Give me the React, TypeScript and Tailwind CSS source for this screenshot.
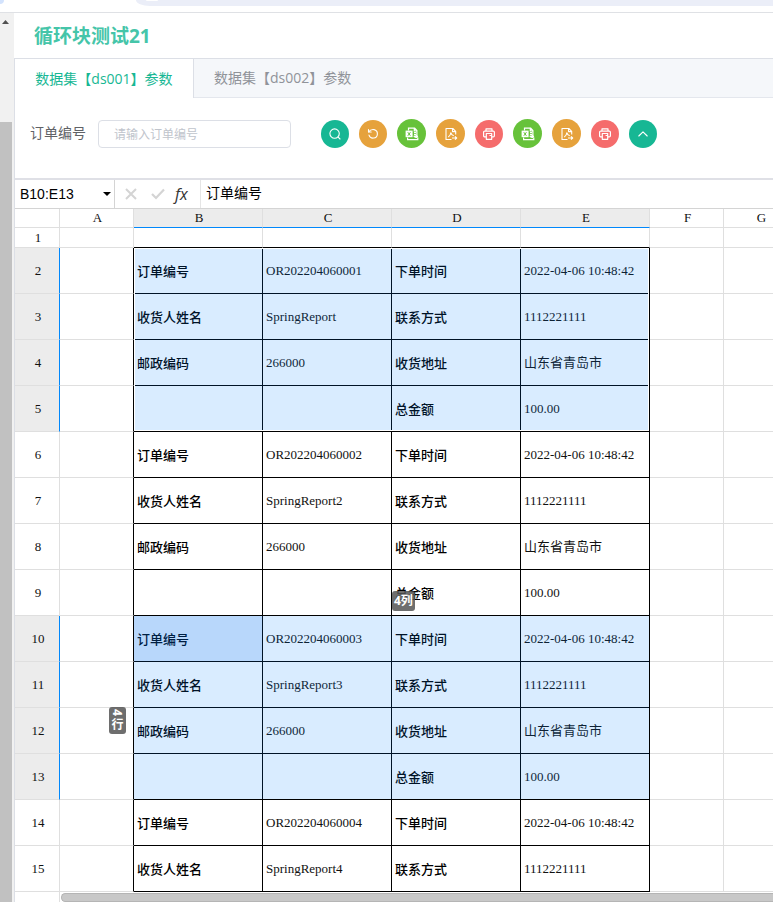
import type { ReactNode } from "react";

interface ActionButtonProps {
    label: string;
    className: string;
    children: ReactNode;
}

const rows = [
    ["订单编号", "OR202204060001", "下单时间", "2022-04-06 10:48:42"],
    ["收货人姓名", "SpringReport", "联系方式", "1112221111"],
    ["邮政编码", "266000", "收货地址", "山东省青岛市"],
    ["", "", "总金额", "100.00"],
    ["订单编号", "OR202204060002", "下单时间", "2022-04-06 10:48:42"],
    ["收货人姓名", "SpringReport2", "联系方式", "1112221111"],
    ["邮政编码", "266000", "收货地址", "山东省青岛市"],
    ["", "", "总金额", "100.00"],
    ["订单编号", "OR202204060003", "下单时间", "2022-04-06 10:48:42"],
    ["收货人姓名", "SpringReport3", "联系方式", "1112221111"],
    ["邮政编码", "266000", "收货地址", "山东省青岛市"],
    ["", "", "总金额", "100.00"],
    ["订单编号", "OR202204060004", "下单时间", "2022-04-06 10:48:42"],
    ["收货人姓名", "SpringReport4", "联系方式", "1112221111"],
];

const columns = ["A", "B", "C", "D", "E", "F", "G"];

const isSelectedRow = (n: number) => (n >= 2 && n <= 5) || (n >= 10 && n <= 13);
const isSelectedColumn = (name: string) => "BCDE".includes(name);

const ActionButton = ({ label, className, children }: ActionButtonProps) => (
    <button type="button" aria-label={label} className={`flex shrink-0 items-center justify-center rounded-full text-white ${className}`}>
        {children}
    </button>
);

const SearchIcon = () => (
    <svg className="size-3" viewBox="0 0 12 12" fill="none" stroke="currentColor" strokeWidth="1.1" strokeLinecap="round">
        <circle cx="5.6" cy="5.6" r="4.7" />
        <path d="M9.2 9.2 11 11" />
    </svg>
);

const ResetIcon = () => (
    <svg className="size-3" viewBox="0 0 12 12" fill="none" stroke="currentColor" strokeWidth="1.1" strokeLinecap="round" strokeLinejoin="round">
        <path d="M1.5 1.5v2.500h2.700" />
        <path d="M1.700 3.900C3 2 5 1.300 7 1.600a4.300 4.300 0 1 1-5 5.500" />
    </svg>
);

const ExcelIcon = () => (
    <svg className="size-[14px]" viewBox="0 0 14 14" fill="none" stroke="currentColor" strokeWidth="1.2">
        <path d="M3.5 3.5V1.200h6.200l2.200 2.200v6.800H9.500M9.300 1.200v2.600h2.600" />
        <path d="M2.600 10.500v2.100h10.200v-2M9 5.600h2M9 7.600h2" />
        <path d="M.6 3.600h7v6.600h-7z" fill="currentColor" stroke="none" />
        <path d="m2.800 5.200 2.600 3.600M5.400 5.200 2.800 8.800" stroke="#67c23a" strokeWidth="1" />
        <path d="M8.600 9.400h3.600M10.800 7.900l1.600 1.500-1.600 1.500" />
    </svg>
);

const PdfIcon = () => (
    <svg className="size-[14px]" viewBox="0 0 14 14" fill="none" stroke="currentColor" strokeWidth="1.1" strokeLinejoin="round">
        <path d="M7.500 12.500H2v-11h6.800l2.900 2.900v3.100M8.500 1.600v3h3.100" />
        <path d="M4.300 10c1.500-1 2.400-2.400 2.500-4.300.4 1.700 1.400 2.700 3 3" />
        <path d="M8 11h4.600M11 9.400l1.700 1.600-1.700 1.600" />
    </svg>
);

const PrintIcon = () => (
    <svg className="size-3" viewBox="0 0 12 12" fill="none" stroke="currentColor" strokeWidth="1.2" strokeLinejoin="round">
        <path d="M3 3V.8h6V3" />
        <path d="M3 8.800H1.700A1.100 1.100 0 0 1 .6 7.700V4.200a1.100 1.100 0 0 1 1.100-1.100h8.600a1.100 1.100 0 0 1 1.100 1.100v3.500a1.100 1.100 0 0 1-1.100 1.100H9" />
        <path d="M3.300 5.500h5.400v5.800H3.300zM6.500 7.500h2" />
    </svg>
);

const CollapseIcon = () => (
    <svg className="size-3" viewBox="0 0 12 12" fill="none" stroke="currentColor" strokeWidth="1.1" strokeLinecap="round" strokeLinejoin="round">
        <path d="M1.800 8 6 3.800 10.200 8" />
    </svg>
);

const SearchForm = () => (
    <form className="flex h-20 items-end px-[15px] pb-[30px]">
        <label htmlFor="orderNo" className="h-7 w-[68px] shrink-0 text-sm leading-[26px] text-[#606266]">订单编号</label>
        <input
            id="orderNo"
            placeholder="请输入订单编号"
            className="h-7 w-[193px] rounded border border-[#dcdfe6] px-[15px] text-xs outline-none placeholder:text-[#c0c4cc]"
        />
        <div className="ml-[30px] flex items-end gap-[10px]">
            <ActionButton label="查询" className="size-7 bg-[#17b794]"><SearchIcon /></ActionButton>
            <ActionButton label="重置" className="size-7 bg-[#e6a23c]"><ResetIcon /></ActionButton>
            <ActionButton label="导出Excel" className="size-[29px] bg-[#67c23a]"><ExcelIcon /></ActionButton>
            <ActionButton label="导出PDF" className="size-[29px] bg-[#e6a23c]"><PdfIcon /></ActionButton>
            <ActionButton label="打印" className="size-7 bg-[#f56c6c]"><PrintIcon /></ActionButton>
            <ActionButton label="导出全部Excel" className="size-[29px] bg-[#67c23a]"><ExcelIcon /></ActionButton>
            <ActionButton label="导出全部PDF" className="size-[29px] bg-[#e6a23c]"><PdfIcon /></ActionButton>
            <ActionButton label="打印全部" className="size-7 bg-[#f56c6c]"><PrintIcon /></ActionButton>
            <ActionButton label="收起" className="size-7 bg-[#17b794]"><CollapseIcon /></ActionButton>
        </div>
    </form>
);

const FormulaBar = () => (
    <div className="flex h-[29px] items-stretch border-b border-[#d4d4d4] text-sm text-black">
        <div className="flex w-[100px] shrink-0 items-center border-r border-[#d4d4d4]">
            <input aria-label="名称框" defaultValue="B10:E13" className="w-[86px] pl-[5px] font-['Liberation_Sans',sans-serif] outline-none" />
            <button type="button" aria-label="选择区域" className="flex size-3 items-center justify-center">
                <svg className="h-1 w-2" viewBox="0 0 8 4"><path d="M0 0h8L4 4z" /></svg>
            </button>
        </div>
        <div className="flex w-[86px] shrink-0 items-center gap-[14px] border-r border-[#e5e5e5] pl-[10px] text-[#d4d4d4]">
            <button type="button" aria-label="取消">
                <svg className="size-3" viewBox="0 0 12 12" stroke="currentColor" strokeWidth="2"><path d="m1 1 10 10M11 1 1 11" /></svg>
            </button>
            <button type="button" aria-label="确认">
                <svg className="h-3 w-[14px]" viewBox="0 0 14 12" fill="none" stroke="currentColor" strokeWidth="2.200"><path d="m1 6 4 4 8-8.500" /></svg>
            </button>
            <button type="button" aria-label="插入函数" className="-ml-1 font-['Open_Sans',sans-serif] text-base italic text-[#333]">fx</button>
        </div>
        <input aria-label="编辑栏" defaultValue="订单编号" className="min-w-0 flex-1 pb-[2px] pl-[5px] outline-none" />
    </div>
);

const Sheet = () => (
    <div className="relative overflow-hidden font-['Liberation_Serif','Noto_Sans_CJK_SC',serif] text-[13px] text-[#111]">
        <table className="w-[783px] table-fixed border-separate border-spacing-0">
            <colgroup>
                <col className="w-[45px]" />
                <col className="w-[74px]" />
                <col className="w-[129px]" />
                <col className="w-[129px]" />
                <col className="w-[129px]" />
                <col className="w-[129px]" />
                <col className="w-[74px]" />
                <col className="w-[74px]" />
            </colgroup>
            <thead>
                <tr className="h-[19px] leading-[18px]">
                    <th className="border-r border-b border-[#dfdfdf] p-0" />
                    {columns.map((name) => (
                        <th
                            key={name}
                            scope="col"
                            className={`border-r border-b border-r-[#dfdfdf] py-0 pr-0 pl-[2px] font-normal ${isSelectedColumn(name) ? "border-b-[#0188fb] bg-[#ececec]" : "border-b-[#dfdfdf]"}`}
                        >
                            {name}
                        </th>
                    ))}
                </tr>
            </thead>
            <tbody>
                <tr className="h-5 leading-[19px]">
                    <th scope="row" className="border-r border-b border-[#dfdfdf] py-0 pr-0 pl-[2px] font-normal">1</th>
                    {columns.map((name) => (
                        <td key={name} className={`border-r border-b border-r-[#dfdfdf] p-0 ${isSelectedColumn(name) ? "border-b-black" : "border-b-[#dfdfdf]"}`} />
                    ))}
                </tr>
                {rows.map((cells, i) => (
                    <tr key={i} className="h-[46px] leading-5">
                        <th
                            scope="row"
                            className={`border-r border-b border-b-[#dfdfdf] py-0 pr-0 pl-[2px] font-normal ${isSelectedRow(i + 2) ? "border-r-[#0188fb] bg-[#ececec]" : "border-r-[#dfdfdf]"}`}
                        >
                            {i + 2}
                        </th>
                        <td className="border-r border-b border-r-black border-b-[#dfdfdf] p-0" />
                        {cells.map((text, j) => (
                            <td
                                key={j}
                                className={`border-r border-b border-black px-[3px] py-0 ${j % 2 === 0 ? "font-['Noto_Sans_CJK_SC',sans-serif] font-medium text-black" : ""}`}
                            >
                                {text}
                            </td>
                        ))}
                        <td className="border-r border-b border-[#dfdfdf] p-0" />
                        <td className="border-r border-b border-[#dfdfdf] p-0" />
                    </tr>
                ))}
            </tbody>
        </table>

        {/* selected ranges B2:E5 and B10:E13 */}
        <div className="pointer-events-none absolute top-[39px] left-[119px] h-[183px] w-[515px] border border-white bg-[#0080ff]/15 bg-clip-padding" />
        <div className="pointer-events-none absolute top-[407px] left-[119px] h-[183px] w-[515px] bg-[#0080ff]/15">
            <div className="h-[45px] w-[128px] bg-[#0064e6]/15" />
        </div>
        <div className="absolute top-[382px] left-[377px] rounded-[3px] bg-[#555]/85 px-[2px] font-['Open_Sans','Noto_Sans_CJK_SC',sans-serif] text-xs leading-5 font-bold text-white">
            4列
        </div>
        <div className="absolute top-[498px] left-[94px] flex w-[17px] flex-col items-center rounded-[3px] bg-[#555]/85 pb-[2px] font-['Open_Sans','Noto_Sans_CJK_SC',sans-serif] text-xs font-bold text-white">
            <span className="rotate-90 leading-[11px]">4</span>
            <span className="leading-[14px]">行</span>
        </div>
    </div>
);

export default function App() {
    return (
        <div className="flex min-h-screen flex-col overflow-hidden bg-white font-['Open_Sans','Noto_Sans_CJK_SC',sans-serif]">
            <div className="flex h-[13px] items-start justify-between border-b border-[#dfe1e5]">
                <div className="h-1 w-1 rounded-br-full bg-[#d3e3fd]" />
                <div className="ml-[132px] h-[6px] flex-1 overflow-hidden rounded-bl-[14px_6px] bg-[#ebeef8] pl-[10px]">
                    <div className="h-px w-3 rounded-b-full bg-white" />
                </div>
            </div>
            <div className="flex flex-1">
                <div className="flex w-[14px] shrink-0 flex-col bg-[#f1f1f1]">
                    <div className="flex h-[109px] items-start pt-[7px] pl-[2px]">
                        <svg className="h-1 w-[7px]" viewBox="0 0 7 4" fill="#505050"><path d="M0 4h7L3.500 0z" /></svg>
                    </div>
                    <div className="w-3 flex-1 bg-[#c1c1c1]" />
                </div>
                <main className="min-w-0 flex-1">
                    <h1 className="h-[45px] pl-5 text-[19px] leading-[46px] font-bold text-[#45c5a9]">循环块测试21</h1>
                    <div className="border-l border-[#dcdfe6]">
                        <div role="tablist" className="flex h-10 border-t border-b border-t-[#dcdfe6] border-b-[#e4e7ed] bg-[#f5f7fa] text-sm">
                            <button type="button" role="tab" aria-selected="true" className="-mb-px w-[179px] border-r border-[#dcdfe6] bg-white text-[#17b794]">
                                数据集【ds001】参数
                            </button>
                            <button type="button" role="tab" aria-selected="false" className="px-5 text-[#909399]">
                                数据集【ds002】参数
                            </button>
                        </div>
                        <SearchForm />
                        <div className="border-t-2 border-[#dfe0e6]">
                            <FormulaBar />
                            <Sheet />
                            <div className="flex h-[10px]">
                                <div className="w-[45px] shrink-0 border-r border-[#dfdfdf]" />
                                <div className="mt-px ml-px h-[9px] flex-1 rounded-l-full border border-r-0 border-[#b5b5b5] bg-[#c8c8c8]" />
                            </div>
                        </div>
                    </div>
                </main>
            </div>
        </div>
    );
}
